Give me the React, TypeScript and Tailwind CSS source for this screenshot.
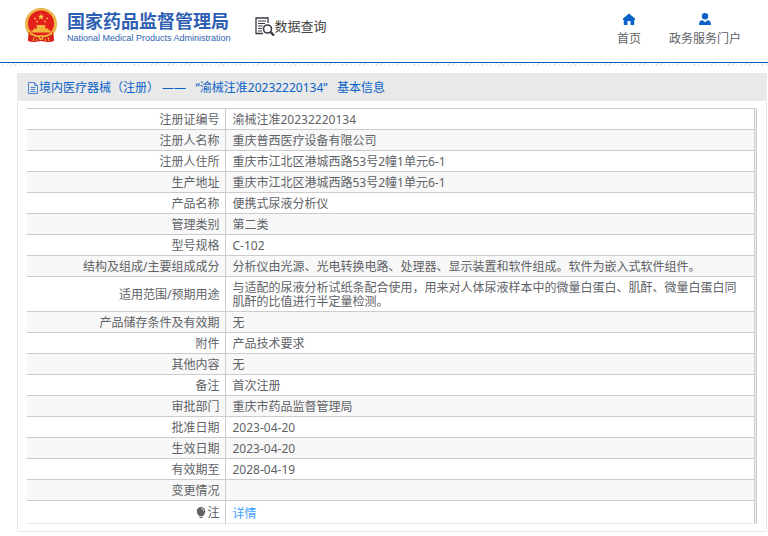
import React from "react";

type Row = { label: string; value: string };

const rows: Row[] = [
  { label: "注册证编号", value: "渝械注准20232220134" },
  { label: "注册人名称", value: "重庆普西医疗设备有限公司" },
  { label: "注册人住所", value: "重庆市江北区港城西路53号2幢1单元6-1" },
  { label: "生产地址", value: "重庆市江北区港城西路53号2幢1单元6-1" },
  { label: "产品名称", value: "便携式尿液分析仪" },
  { label: "管理类别", value: "第二类" },
  { label: "型号规格", value: "C-102" },
  {
    label: "结构及组成/主要组成成分",
    value: "分析仪由光源、光电转换电路、处理器、显示装置和软件组成。软件为嵌入式软件组件。",
  },
  {
    label: "适用范围/预期用途",
    value:
      "与适配的尿液分析试纸条配合使用，用来对人体尿液样本中的微量白蛋白、肌酐、微量白蛋白同肌酐的比值进行半定量检测。",
  },
  { label: "产品储存条件及有效期", value: "无" },
  { label: "附件", value: "产品技术要求" },
  { label: "其他内容", value: "无" },
  { label: "备注", value: "首次注册" },
  { label: "审批部门", value: "重庆市药品监督管理局" },
  { label: "批准日期", value: "2023-04-20" },
  { label: "生效日期", value: "2023-04-20" },
  { label: "有效期至", value: "2028-04-19" },
  { label: "变更情况", value: "" },
];

function Emblem() {
  return (
    <svg className="h-9 w-8" viewBox="0 0 32 36" aria-hidden="true">
      <path d="M4 24L3 33l6 1 7-1 7 1 6-1-1-9z" fill="#d8201c" />
      <circle cx="16" cy="16" r="16" fill="#e9ab3c" />
      <circle cx="16" cy="16" r="14.500" fill="none" stroke="#f3cd63" strokeDasharray="2 1" />
      <circle cx="16" cy="15.500" r="13" fill="#e4201b" />
      <path d="M16 5.500l.8 2.300h2.500l-2 1.500.8 2.400-2.100-1.400-2.100 1.400.8-2.400-2-1.500h2.500z" fill="#f8cf4c" />
      <g fill="#f3b73f">
        <circle cx="10" cy="10.500" r="1" />
        <circle cx="12" cy="13.500" r="1" />
        <circle cx="20" cy="13.500" r="1" />
        <circle cx="22" cy="10.500" r="1" />
        <path d="M12 17h8l1 1.500H11zM12 18.500h8v2h-8zM9 20.500h14l1 2H8zM6 22.500h20l-1 2H7z" />
      </g>
      <path d="M4 24q6 5 12 5t12-5l1 9-6 1-7-2-7 2-6-1z" fill="#d8201c" />
      <path d="M5 25.500q5 3 11 3t11-3" fill="none" stroke="#f1b83c" strokeWidth="1.500" />
      <circle cx="16" cy="29.500" r="2.500" fill="#f1b83c" />
      <circle cx="16" cy="29.500" r="1" fill="#d8201c" />
      <path d="M9 29l-1 4M23 29l1 4M12 31l-1 2M20 31l1 2" stroke="#f1b83c" strokeWidth="1" />
    </svg>
  );
}

function SearchDocIcon() {
  return (
    <svg className="h-5 w-5" viewBox="0 0 20 20" fill="none" stroke="#3b3945" aria-hidden="true">
      <path d="M8 17.500H1V2h12v5" strokeWidth="1.300" />
      <path d="M3 5h8M3 7.500h7M3 10h5M3 12.500h4M3 15h4" strokeWidth="1" />
      <circle cx="12.500" cy="13" r="4" strokeWidth="1.600" />
      <path d="M15.500 16l3.500 3.500" strokeWidth="2.400" />
    </svg>
  );
}

function HomeIcon() {
  return (
    <svg className="h-3 w-3" viewBox="0 0 12 12" fill="#0a62c6" aria-hidden="true">
      <path d="M6 .500L0 5.500V7h.800v5H4.500V8h3v4h3.700V7H12V5.500z" />
    </svg>
  );
}

function UserIcon() {
  return (
    <svg className="h-3 w-3" viewBox="0 0 12 12" fill="#0a62c6" aria-hidden="true">
      <circle cx="6" cy="3.200" r="3.200" />
      <path d="M0 12c0-3 1-4.800 3.500-4.800L6 9.200l2.500-2C11 7.200 12 9 12 12z" />
    </svg>
  );
}

function FileIcon() {
  return (
    <svg className="h-3 w-[11px]" viewBox="0 0 11 12" fill="none" stroke="#2a6fd0" aria-hidden="true">
      <path d="M.500.500h6l3 3v8h-9zM6.500.500v3h3M2.500 5.500h5M2.500 7.500h5M2.500 9.500h5" strokeWidth="0.800" />
    </svg>
  );
}

function BulbIcon() {
  return (
    <svg className="h-3 w-[10px]" viewBox="0 0 10 12" aria-hidden="true">
      <path d="M5 0a4.200 4.200 0 0 1 4.200 4.200c0 2.800-1.700 3.800-2.200 5H3C2.500 8 .8 7 .8 4.200A4.200 4.200 0 0 1 5 0z" fill="#606266" />
      <path d="M3.500 10.500h3" stroke="#606266" />
      <path d="M5.500 1.500q2 .5 2.200 2.500" fill="none" stroke="#e5e5e5" />
    </svg>
  );
}

export default function App() {
  return (
    <div className="min-h-screen bg-white font-['Noto_Sans','Noto_Sans_CJK_SC',sans-serif] text-xs text-[#606266]">
      {/* Header */}
      <header className="flex h-[63px] items-start justify-between border-b border-[#0a62c6] pr-[27px] pl-[25px]">
        <div className="flex items-start">
          <a href="#" className="flex items-start gap-[10px] pt-2 text-[#2f5fb3]">
            <Emblem />
            <span className="flex flex-col pt-1">
              <span className="text-lg leading-[18px] font-bold">国家药品监督管理局</span>
              <span className="font-['Liberation_Sans',sans-serif] text-[9px] leading-4 whitespace-nowrap">
                National Medical Products Administration
              </span>
            </span>
          </a>
          <h1 className="ml-6 flex items-center pt-4 text-[13px] leading-5 text-[#444]">
            <SearchDocIcon />
            数据查询
          </h1>
        </div>
        <nav className="flex gap-7 pt-[13px]">
          <a href="#" className="flex flex-col items-center gap-[5px]">
            <HomeIcon />
            <span className="leading-[18px]">首页</span>
          </a>
          <a href="#" className="flex flex-col items-center gap-[5px]">
            <UserIcon />
            <span className="leading-[18px]">政务服务门户</span>
          </a>
        </nav>
      </header>
      <div className="h-[3px] bg-[repeating-linear-gradient(135deg,#e6e6e6_0,#e6e6e6_1px,#fff_1px,#fff_3px)]" />

      {/* Detail panel */}
      <main className="mt-[7px] mr-px ml-[17px] border border-[#e9e9eb]">
        <h2 className="flex h-[27px] items-center bg-[#e9e9e9] pl-[10px] text-[#0a62c6]">
          <FileIcon />
          <span className="whitespace-pre">境内医疗器械（注册） ——&nbsp; &nbsp;“渝械注准20232220134” &nbsp;&nbsp;基本信息</span>
        </h2>
        <div className="mt-[7px] mr-[9px] mb-[7px] ml-[9px] border-r border-[#ccc] bg-[#ededed] pr-px">
          <table className="w-full table-fixed border-r border-b border-[#ccc] border-b-[#e9e9eb] bg-white leading-[14px]">
            <colgroup>
              <col className="w-[198px]" />
              <col />
            </colgroup>
            <tbody>
              {rows.map((row) => (
                <tr key={row.label} className="border-t border-[#ccc] even:bg-[#f8f8f8]">
                  <th scope="row" className="border-r border-[#ccc] pt-1 pr-[5px] pb-[2px] text-right font-normal">
                    {row.label}
                  </th>
                  <td className="pt-1 pr-2 pb-[2px] pl-[7px]">{row.value || "\u00a0"}</td>
                </tr>
              ))}
              <tr className="border-t border-[#ccc]">
                <th scope="row" className="border-r border-[#ccc] pt-[5px] pr-[5px] pb-[3px] font-normal">
                  <span className="flex items-center justify-end gap-px">
                    <BulbIcon />注
                  </span>
                </th>
                <td className="pt-[6px] pr-2 pb-[2px] pl-[7px]">
                  <a href="#" className="text-[#409eff]">
                    详情
                  </a>
                </td>
              </tr>
            </tbody>
          </table>
        </div>
      </main>
    </div>
  );
}
